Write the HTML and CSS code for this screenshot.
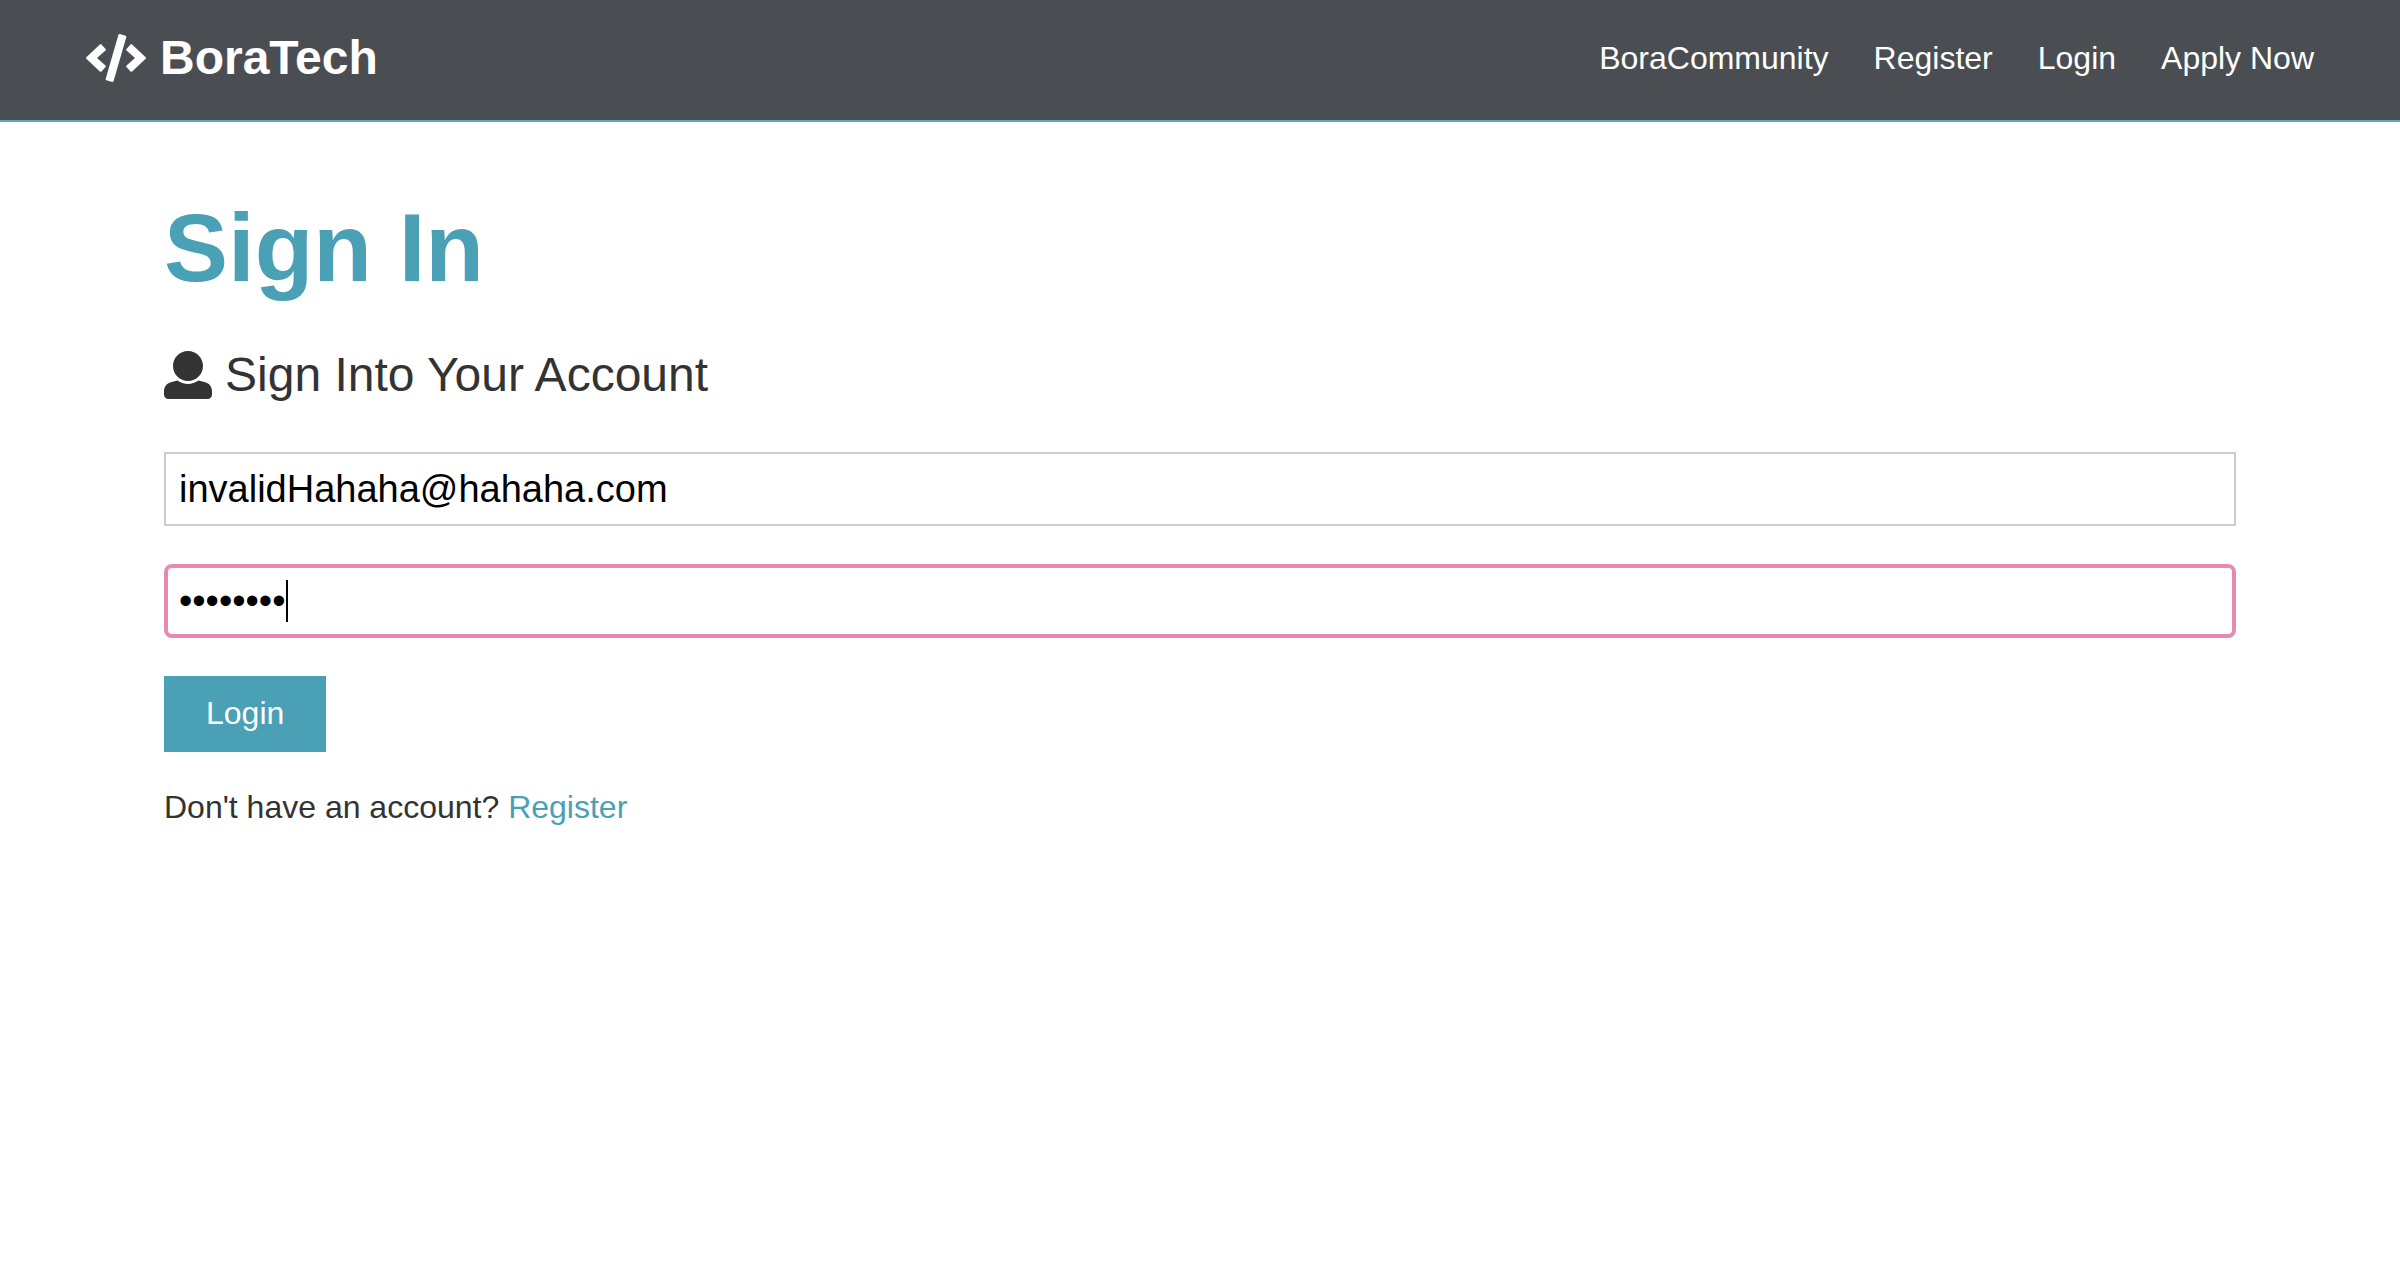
FILE: index.html
```html
<!DOCTYPE html>
<html lang="en">
<head>
  <meta charset="utf-8">
  <meta name="viewport" content="width=device-width, initial-scale=1">
  <title>BoraTech</title>
  <link rel="stylesheet" href="styles.css">
</head>
<body>
  <header class="navbar">
    <a class="brand" href="#">
      <svg class="brand-icon" viewBox="0 0 640 512" aria-hidden="true"><path fill="currentColor" d="M278.9 511.5l-61-17.7c-6.4-1.8-10-8.5-8.2-14.9L346.2 8.7c1.8-6.4 8.5-10 14.9-8.2l61 17.7c6.4 1.8 10 8.5 8.2 14.9L293.8 503.3c-1.9 6.4-8.5 10.1-14.9 8.2zm-114-112.2l43.5-46.4c4.6-4.9 4.3-12.7-.8-17.2L117 256l90.6-79.7c5.1-4.5 5.5-12.3.8-17.2l-43.5-46.4c-4.5-4.8-12.1-5.1-17-.5L3.8 247.2c-5.1 4.7-5.1 12.8 0 17.5l144.1 135.1c4.9 4.6 12.5 4.4 17-.5zm327.2.6l144.1-135.1c5.1-4.7 5.1-12.8 0-17.5L492.1 112.1c-4.8-4.5-12.4-4.3-17 .5L431.6 159c-4.6 4.9-4.3 12.7.8 17.2L523 256l-90.6 79.7c-5.1 4.5-5.5 12.3-.8 17.2l43.5 46.4c4.5 4.9 12.1 5.1 17 .6z"/></svg>
      <span>BoraTech</span>
    </a>
    <nav class="nav-links">
      <a href="#">BoraCommunity</a>
      <a href="#">Register</a>
      <a href="#">Login</a>
      <a href="#">Apply Now</a>
    </nav>
  </header>

  <main class="container">
    <h1 class="title">Sign In</h1>
    <p class="lead">
      <svg class="lead-icon" viewBox="0 0 512 512" aria-hidden="true"><path fill="currentColor" d="M256 0c88.366 0 160 71.634 160 160s-71.634 160-160 160S96 248.366 96 160 167.634 0 256 0zm183.283 333.821l-71.313-17.828c-74.923 53.89-165.738 41.864-223.94 0l-71.313 17.828C29.981 344.505 0 382.903 0 426.955V464c0 26.51 21.49 48 48 48h416c26.51 0 48-21.49 48-48v-37.045c0-44.052-29.981-82.45-72.717-93.134z"/></svg>
      <span>Sign Into Your Account</span>
    </p>
    <form class="form">
      <div class="field">
        <input class="input" type="email" aria-label="Email Address" value="invalidHahaha@hahaha.com">
      </div>
      <div class="field">
        <input class="input input-active" type="password" aria-label="Password" value="password">
        <span class="caret"></span>
      </div>
      <button class="button" type="submit">Login</button>
    </form>
    <p class="hint">Don't have an account? <a href="#">Register</a></p>
  </main>
</body>
</html>
```
FILE: styles.css
```css
* {
  box-sizing: border-box;
  margin: 0;
  padding: 0;
}

body {
  font-family: "Liberation Sans", Arial, Helvetica, sans-serif;
  font-size: 32px;
  line-height: 52px;
  color: #333;
  background: #fff;
}

a {
  color: #4aa0b5;
  text-decoration: none;
}

.navbar {
  display: flex;
  align-items: center;
  justify-content: space-between;
  padding: 29px 86px 33px;
  color: #fff;
  background: #4a4d52;
  border-bottom: 2px solid #5aa9b9;
}

.navbar a {
  color: #fff;
}

.brand {
  display: flex;
  align-items: center;
  gap: 14px;
  font-size: 48px;
  font-weight: bold;
  line-height: 58px;
}

.brand-icon {
  width: 60px;
  height: 48px;
}

.nav-links {
  display: flex;
  gap: 45px;
}

.container {
  padding: 68px 164px;
}

.title {
  margin-bottom: 40px;
  font-size: 96px;
  line-height: 116px;
  color: #4aa0b5;
}

.lead {
  display: flex;
  align-items: center;
  gap: 13px;
  margin-bottom: 48px;
  font-size: 48px;
  line-height: 58px;
}

.lead-icon {
  width: 48px;
  height: 48px;
}

.form {
  display: flex;
  flex-direction: column;
  align-items: flex-start;
  gap: 38px;
  margin-bottom: 29px;
}

.field {
  position: relative;
  width: 100%;
}

.input {
  display: block;
  width: 100%;
  height: 74px;
  padding: 0 13px;
  font: inherit;
  font-size: 38px;
  color: #000;
  background: #fff;
  border: 2px solid #ccc;
  outline: none;
}

.input-active {
  padding: 0 11px;
  border: 4px solid #e78ab3;
  border-radius: 8px;
}

.caret {
  position: absolute;
  top: 16px;
  left: 122px;
  width: 2px;
  height: 42px;
  background: #000;
}

.button {
  padding: 11px 42px 13px;
  font: inherit;
  color: #fff;
  background: #4aa0b5;
  border: none;
}
```
